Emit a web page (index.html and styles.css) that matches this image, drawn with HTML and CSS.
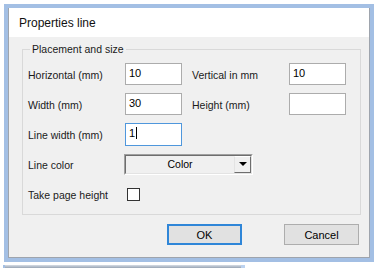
FILE: index.html
```html
<!DOCTYPE html>
<html lang="en">
<head>
    <meta charset="UTF-8">
    <title>Properties line</title>
    <link rel="stylesheet" href="styles.css">
</head>
<body>
    <div class="dialog">
        <div class="window">
            <div class="titlebar">Properties line</div>
            <div class="content">
                <fieldset class="group">
                    <legend>Placement and size</legend>
                    <div class="fields">
                        <label class="lbl">Horizontal (mm)</label>
                        <div class="field">10</div>
                        <label class="lbl">Vertical in mm</label>
                        <div class="field">10</div>

                        <label class="lbl">Width (mm)</label>
                        <div class="field">30</div>
                        <label class="lbl">Height (mm)</label>
                        <div class="field"></div>

                        <label class="lbl">Line width (mm)</label>
                        <div class="field focused">1<span class="caret"></span></div>
                        <span></span>
                        <span></span>

                        <label class="lbl">Line color</label>
                        <div class="combo">
                            <div class="combo-inner">
                                <span class="combo-text">Color</span>
                                <span class="combo-btn"><span class="arrow"></span></span>
                            </div>
                        </div>
                        <span></span>

                        <label class="lbl">Take page height</label>
                        <div class="check"></div>
                    </div>
                </fieldset>
                <div class="buttons">
                    <button class="btn default">OK</button>
                    <button class="btn">Cancel</button>
                </div>
            </div>
        </div>
    </div>
    <div class="behind"></div>
</body>
</html>
```

FILE: styles.css
```css
body {
    margin: 0;
    background-color: white;
    font-family: "Liberation Sans", Arial, sans-serif;
    font-size: 10.5px;
    color: #1a1a1a;
}

.dialog {
    margin: 4px 0 0 4px;
    width: 362px;
    border: 4px solid #a3bfe4;
}

.window {
    border: 1px solid #9ea4ad;
    border-top: none;
}

.titlebar {
    background-color: white;
    height: 27px;
    padding: 2px 0 0 10px;
    line-height: 27px;
    font-size: 12px;
    color: #111;
}

.content {
    background-color: #f0f0f0;
    height: 220px;
    padding-top: 5px;
    box-sizing: border-box;
}

.group {
    margin: 0 8px 0 13px;
    padding: 7px 0 9px 5px;
    border: 1px solid #d9d9d9;
    min-width: 0;
}

.group legend {
    margin-left: 2px;
    padding: 0 2px;
    line-height: 14px;
    font-size: 10.5px;
}

.fields {
    display: grid;
    grid-template-columns: 97px 67px 97px 57px;
    grid-auto-rows: 22px;
    row-gap: 8px;
    align-items: center;
}

.lbl {
    padding-top: 2px;
}

.field {
    width: 57px;
    height: 22px;
    box-sizing: border-box;
    border: 1px solid #acacac;
    background-color: white;
    padding: 2px 3px;
    line-height: 14px;
    font-size: 11px;
    color: #000;
}

.field.focused {
    border-color: #4f97dc;
    height: 23px;
}

.caret {
    display: inline-block;
    width: 1px;
    height: 12px;
    margin-left: 1px;
    background-color: #000;
    vertical-align: -2px;
}

.combo {
    grid-column: 2 / 4;
    width: 129px;
    height: 21px;
    margin-left: -1px;
    box-sizing: border-box;
    border: 1px solid;
    border-color: #a0a0a0 #ffffff #ffffff #a0a0a0;
}

.combo-inner {
    display: flex;
    height: 100%;
    box-sizing: border-box;
    border: 1px solid;
    border-color: #6e6e6e #e3e3e3 #e3e3e3 #6e6e6e;
    background-color: #f0f0f0;
}

.combo-text {
    flex: 1;
    text-align: center;
    line-height: 17px;
    color: #000;
}

.combo-btn {
    width: 15px;
    border: 1px solid;
    border-color: #ffffff #6e6e6e #6e6e6e #e3e3e3;
    display: flex;
    align-items: center;
    justify-content: center;
}

.arrow {
    width: 0;
    height: 0;
    border-left: 4px solid transparent;
    border-right: 4px solid transparent;
    border-top: 4px solid #000;
}

.check {
    width: 13px;
    height: 13px;
    margin-left: 2px;
    box-sizing: border-box;
    border: 1px solid #333;
    background-color: white;
}

.buttons {
    display: flex;
    justify-content: flex-end;
    gap: 42px;
    margin: 9px 10px 0 0;
}

.btn {
    width: 75px;
    height: 21px;
    padding: 0;
    border: 1px solid #adadad;
    background-color: #e1e1e1;
    font-family: "Liberation Sans", Arial, sans-serif;
    font-size: 11px;
    color: #000;
}

.btn.default {
    border: 2px solid #2f86d8;
}

.behind {
    margin: 3px 0 0 3px;
    width: 236px;
    height: 3px;
    border-left: 2px solid #a3bfe4;
    border-right: 4px solid #bcd2ef;
    background: linear-gradient(#d6dce4, #98a4b4);
}
```
